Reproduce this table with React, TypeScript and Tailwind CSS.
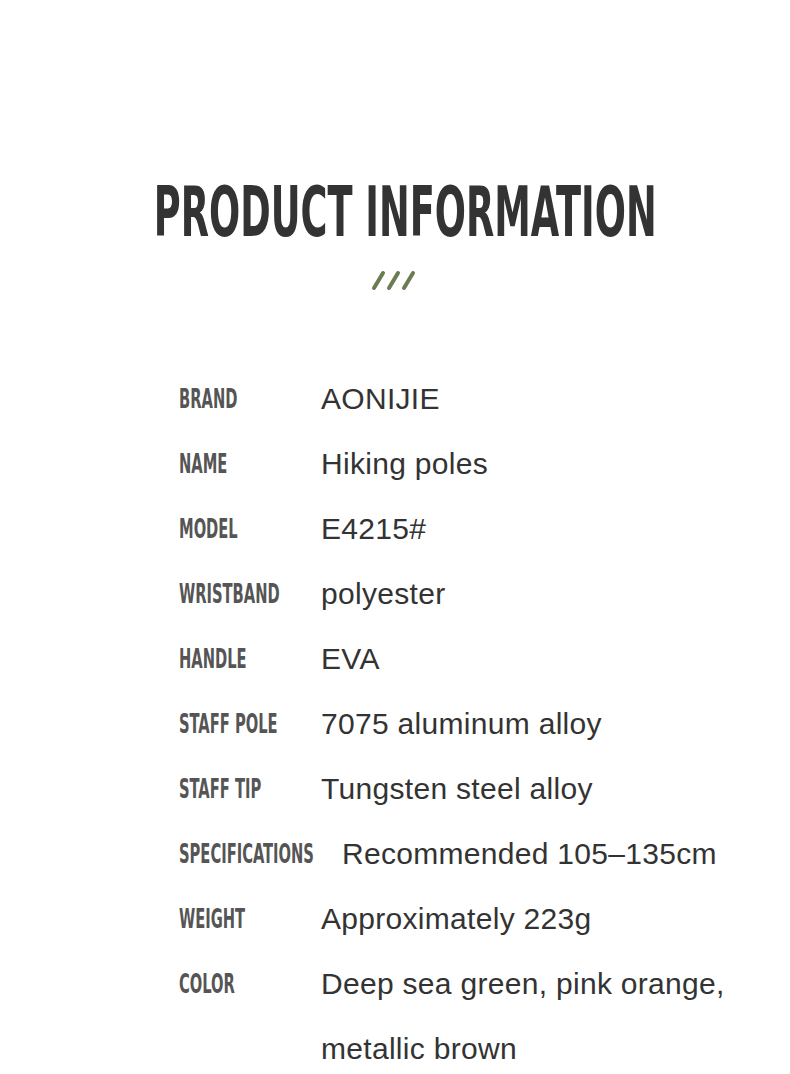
const rows: { label: string; value: string; wide?: boolean }[] = [
  { label: "BRAND", value: "AONIJIE" },
  { label: "NAME", value: "Hiking poles" },
  { label: "MODEL", value: "E4215#" },
  { label: "WRISTBAND", value: "polyester" },
  { label: "HANDLE", value: "EVA" },
  { label: "STAFF POLE", value: "7075 aluminum alloy" },
  { label: "STAFF TIP", value: "Tungsten steel alloy" },
  { label: "SPECIFICATIONS", value: "Recommended 105–135cm", wide: true },
  { label: "WEIGHT", value: "Approximately 223g" },
  { label: "COLOR", value: "Deep sea green, pink orange, metallic brown" },
];

export default function App() {
  return (
    <div className="min-h-[1074px] w-[790px] overflow-hidden bg-white font-['Liberation_Sans',Arial,sans-serif]">
      <div className="flex flex-col items-center overflow-hidden pt-[172px]">
        <h1 className="whitespace-nowrap pl-[20px] font-['DejaVu_Sans_Condensed','DejaVu_Sans',sans-serif] text-[70px] font-bold leading-[80px] text-[#333333]">
          <span className="inline-block scale-x-[0.583]">PRODUCT INFORMATION</span>
        </h1>
        <svg width="48" height="22" viewBox="0 0 48 22" className="mt-[17px]">
          <g stroke="#6b7b52" strokeWidth="4" strokeLinecap="round">
            <line x1="3" y1="19" x2="12" y2="4" />
            <line x1="18" y1="19" x2="27" y2="4" />
            <line x1="33" y1="19" x2="42" y2="4" />
          </g>
        </svg>
      </div>

      <div className="mt-[75px] flex flex-col pl-[179px]">
        {rows.map((r) => (
          <div key={r.label} className="flex items-start">
            <div
              className={`${r.wide ? "w-[163px]" : "w-[142px]"} shrink-0 whitespace-nowrap font-['DejaVu_Sans_Condensed','DejaVu_Sans',sans-serif] text-[27px] font-bold leading-[65px] text-[#555555]`}
            >
              <span className="inline-block origin-left scale-x-[0.605]">{r.label}</span>
            </div>
            <div className="w-[430px] text-[30px] leading-[65px] tracking-[0.3px] text-[#333333]">{r.value}</div>
          </div>
        ))}
      </div>
    </div>
  );
}
